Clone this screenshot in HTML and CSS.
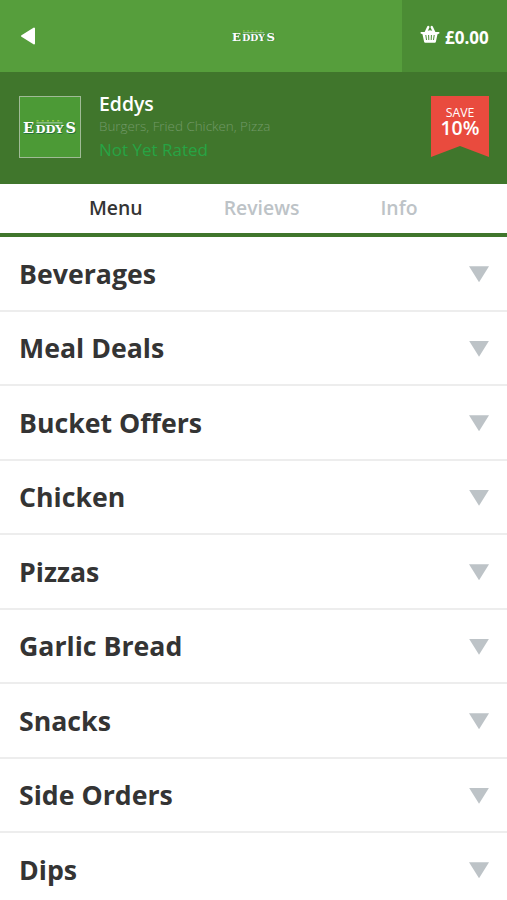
FILE: index.html
```html
<!DOCTYPE html>
<html lang="en">
<head>
  <meta charset="UTF-8" />
  <meta name="viewport" content="width=device-width, initial-scale=1" />
  <title>Eddys - Menu</title>
  <link rel="stylesheet" href="styles.css">
</head>
<body>
  <header class="topbar">
    <a class="back" href="#" aria-label="Back">
      <svg width="16" height="18" viewBox="0 0 16 18"><path d="M14 1.5v15L2 9z" fill="#fff" stroke="#fff" stroke-width="2" stroke-linejoin="round" /></svg>
    </a>
    <svg class="brand" width="44" height="16" viewBox="0 0 52 19">
      <g id="logo">
        <path d="M13 3.500h25" stroke="#8dc63f" stroke-width="1.5" stroke-dasharray="2 3" />
        <path d="M13 5.500h25" stroke="#a8ceb0" stroke-width="1" />
        <g class="logo-shadow" transform="translate(.7 1)">
          <text x="0" y="15" class="logo-big">E</text>
          <text x="12" y="15" class="logo-small" textLength="27" lengthAdjust="spacingAndGlyphs">DDY</text>
          <text x="41" y="15" class="logo-big">S</text>
        </g>
        <text x="0" y="15" class="logo-big">E</text>
        <text x="12" y="15" class="logo-small" textLength="27" lengthAdjust="spacingAndGlyphs">DDY</text>
        <text x="41" y="15" class="logo-big">S</text>
      </g>
    </svg>
    <a class="basket" href="#">
      <svg width="20" height="19" viewBox="0 0 20 19">
        <path d="M5 9L8.300 2M15 9L11.700 2" stroke="#fff" stroke-width="2.4" stroke-linecap="round" />
        <path d="M5.500 7Q10 3.500 14.500 7h4.200q.8 0 .8.800t-.8 1l-1.200.4-1.600 7.600q-.2.900-1.100.900H5.200q-.9 0-1.100-.9L2.500 9.200 1.300 8.800Q.5 8.600.5 7.800T1.300 7z" fill="#fff" />
        <path d="M5.800 10l.7 5M8.600 10l.2 5M11.400 10l-.2 5M14.200 10l-.7 5" stroke="#4b8c34" stroke-width="1" />
      </svg>
      <span>£0.00</span>
    </a>
  </header>

  <section class="restaurant">
    <div class="thumb">
      <svg width="54" height="20" viewBox="0 0 52 19"><use href="#logo" /></svg>
    </div>
    <div class="details">
      <h1>Eddys</h1>
      <p class="cuisines">Burgers, Fried Chicken, Pizza</p>
      <p class="rating">Not Yet Rated</p>
    </div>
    <div class="offer">
      <span class="offer-label">SAVE</span>
      <span class="offer-value">10%</span>
    </div>
  </section>

  <nav class="tabs">
    <a class="active" href="#">Menu</a>
    <a href="#">Reviews</a>
    <a href="#">Info</a>
  </nav>

  <ul class="categories">
    <li><span>Beverages</span><i class="arrow"></i></li>
    <li><span>Meal Deals</span><i class="arrow"></i></li>
    <li><span>Bucket Offers</span><i class="arrow"></i></li>
    <li><span>Chicken</span><i class="arrow"></i></li>
    <li><span>Pizzas</span><i class="arrow"></i></li>
    <li><span>Garlic Bread</span><i class="arrow"></i></li>
    <li><span>Snacks</span><i class="arrow"></i></li>
    <li><span>Side Orders</span><i class="arrow"></i></li>
    <li><span>Dips</span><i class="arrow"></i></li>
  </ul>
</body>
</html>
```
FILE: styles.css
```css
:root {
  --green: #569e3c;
  --mid-green: #4b8c34;
  --dark-green: #40762c;
  --red: #e94b3e;
  --text: #343434;
  --gray: #bdc3c7;
}
* {
  box-sizing: border-box;
}
body {
  margin: 0;
  height: 900px;
  overflow: hidden;
  background: #fff;
  color: var(--text);
  font-family: 'Open Sans', sans-serif;
}
a {
  color: inherit;
  text-decoration: none;
}
svg {
  display: block;
}
.topbar {
  display: grid;
  grid-template-columns: 105px 1fr 105px;
  align-items: center;
  height: 72px;
  background: var(--green);
}
.back {
  padding-left: 20px;
}
.brand {
  justify-self: center;
}
.logo-big,
.logo-small {
  font-family: 'DejaVu Serif', serif;
  font-weight: bold;
  fill: #fff;
}
.logo-big {
  font-size: 14px;
}
.logo-small {
  font-size: 10px;
}
.logo-shadow text {
  fill: #25713f;
}
.basket {
  display: flex;
  align-items: center;
  gap: 5px;
  height: 100%;
  padding: 2px 0 0 18px;
  background: var(--mid-green);
  color: #fff;
  font-size: 17px;
  font-weight: 700;
}
.basket svg {
  margin-top: -5px;
}
.restaurant {
  display: flex;
  align-items: flex-start;
  height: 112px;
  padding: 24px 18px 0 19px;
  background: var(--dark-green);
}
.thumb {
  display: flex;
  align-items: center;
  justify-content: center;
  width: 62px;
  height: 62px;
  border: 1px solid #a0bb96;
  background: #4c9a36;
}
.details {
  flex: 1;
  margin-left: 18px;
}
.details h1 {
  margin: -5px 0 0;
  color: #fff;
  font-size: 19.4px;
  font-weight: 600;
  line-height: 26px;
}
.details p {
  margin: 0;
}
.cuisines {
  color: #729968;
  font-size: 13.4px;
  font-weight: 300;
  line-height: 18px;
}
.rating {
  color: #27a444;
  font-size: 17px;
  line-height: 30px;
}
.offer {
  display: flex;
  flex-direction: column;
  align-items: center;
  width: 58px;
  height: 61px;
  padding-top: 9px;
  background: var(--red);
  clip-path: polygon(0 0, 100% 0, 100% 100%, 50% 82%, 0 100%);
  color: #fff;
}
.offer-label {
  font-size: 12.3px;
  line-height: 15px;
}
.offer-value {
  font-size: 19.4px;
  font-weight: 600;
  line-height: 16px;
}
.tabs {
  display: flex;
  gap: 81px;
  height: 53px;
  padding-left: 89px;
  border-bottom: 4px solid var(--dark-green);
  color: var(--gray);
  font-size: 19.4px;
  font-weight: 600;
  line-height: 48px;
}
.tabs .active {
  color: var(--text);
}
.categories {
  margin: 0;
  padding: 0;
  list-style: none;
}
.categories li {
  display: flex;
  align-items: center;
  justify-content: space-between;
  height: 74.5px;
  padding: 0 18px 0 19px;
  border-bottom: 2px solid #ededed;
  font-size: 26.7px;
  font-weight: 700;
}
.arrow {
  width: 20px;
  height: 16px;
  margin-top: 2px;
  background: var(--gray);
  clip-path: polygon(0 0, 100% 0, 50% 100%);
}
```
